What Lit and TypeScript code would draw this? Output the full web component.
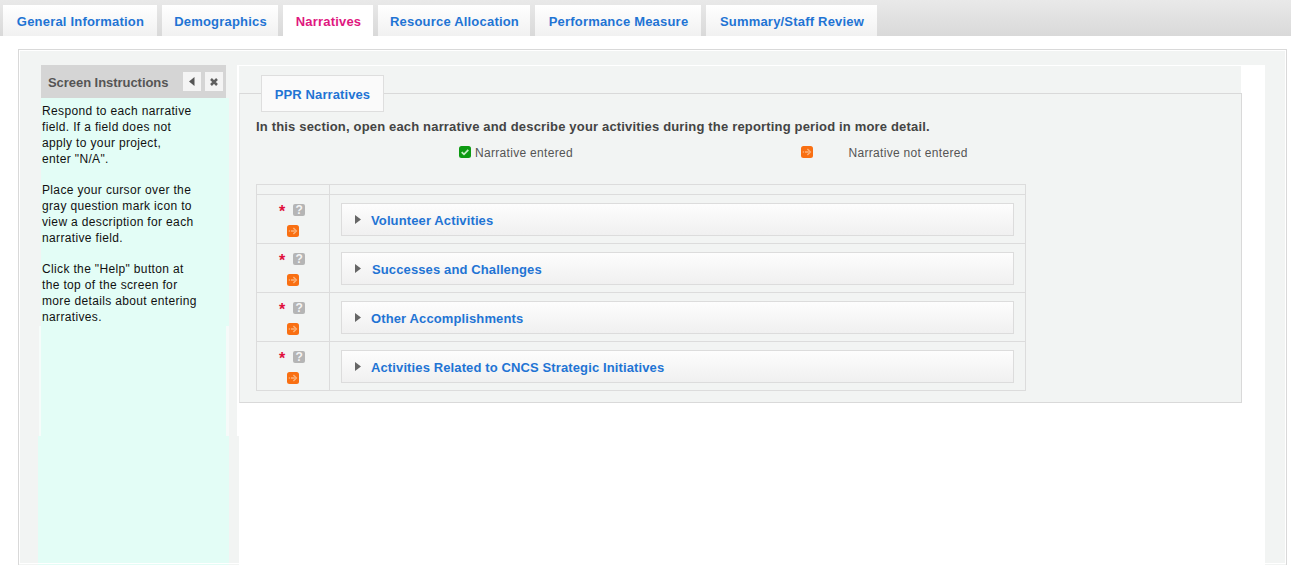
import { LitElement, css, html } from "lit";
import { customElement } from "lit/decorators.js";

const tabs = [
  { label: "General Information", width: 154 },
  { label: "Demographics", width: 116 },
  { label: "Narratives", width: 90, active: true },
  { label: "Resource Allocation", width: 152 },
  { label: "Performance Measure", width: 166 },
  { label: "Summary/Staff Review", width: 171 },
];

const narratives = [
  "Volunteer Activities",
  "Successes and Challenges",
  "Other Accomplishments",
  "Activities Related to CNCS Strategic Initiatives",
];

const orangeIcon = html`<svg class="icon" width="12" height="12" viewBox="0 0 12 12">
  <rect width="12" height="12" rx="2.5" fill="#f96f12"></rect>
  <path d="M1.8 6h1.1M3.9 6h3.9" stroke="#fbb27a" stroke-width="1.3" fill="none"></path>
  <path d="M6.4 3l3 3-3 3" stroke="#fbb27a" stroke-width="1.4" fill="none"></path>
</svg>`;

const greenIcon = html`<svg class="icon" width="12" height="12" viewBox="0 0 12 12">
  <rect width="12" height="12" rx="2.5" fill="#0d9a12"></rect>
  <path d="M2.7 6.1l2.3 2.3L9.3 3.8" stroke="#c8efc8" stroke-width="1.7" fill="none"></path>
</svg>`;

@customElement("app-root")
export class AppRoot extends LitElement {
  static styles = css`
    :host {
      display: block;
      height: 565px;
      overflow: hidden;
      background: #fff;
      font-family: "Liberation Sans", Arial, sans-serif;
    }
    .tabbar {
      display: flex;
      height: 36px;
      box-sizing: border-box;
      padding: 5px 0 0 3px;
      gap: 5px;
      background: linear-gradient(#e9e9e9, #d9d9d9);
    }
    .tab {
      box-sizing: border-box;
      padding: 9px 0 0 1px;
      text-align: center;
      font-size: 13px;
      line-height: 15px;
      font-weight: bold;
      letter-spacing: 0.2px;
      color: #1f74d4;
      background: linear-gradient(#ffffff, #f1f1f1);
    }
    .tab.active {
      color: #e0187f;
      background: #fff;
    }
    .frame {
      display: flex;
      height: 516px;
      box-sizing: border-box;
      margin: 13px 4px 0 18px;
      padding: 15px 21px 0 19px;
      border: 1px solid #d9d9d9;
      border-bottom: 0;
      outline: 1px solid #fff;
      outline-offset: -2px;
      background: #f2f4f3;
    }
    .sidebar {
      display: flex;
      flex-direction: column;
      flex: none;
      width: 194px;
      margin-right: 5px;
    }
    .side-head {
      display: flex;
      align-items: center;
      flex: none;
      height: 33px;
      box-sizing: border-box;
      margin: 0 6px 0 3px;
      padding: 0 3px 0 7px;
      background: #d5d5d5;
    }
    .side-title {
      flex: 1;
      padding-top: 1px;
      font-size: 13px;
      letter-spacing: -0.05px;
      font-weight: bold;
      color: #555;
    }
    .side-btn {
      display: flex;
      align-items: center;
      justify-content: center;
      width: 18px;
      height: 19px;
      margin-left: 4px;
      background: #f4f4f4;
    }
    .side-body {
      flex: none;
      height: 228px;
      box-sizing: border-box;
      margin: 0 3px 0 3px;
      padding: 5px 0 0 1px;
      background: #e3fdf6;
      font-size: 12px;
      line-height: 16px;
      letter-spacing: 0.35px;
      color: #111;
    }
    .side-body p {
      margin: 0 0 15px;
    }
    .side-mid {
      flex: none;
      height: 110px;
      box-sizing: border-box;
      margin: 0 3px 0 1px;
      border-left: 2px solid #f6fcfa;
      border-right: 3px solid #f6faf9;
      background: #e3fdf6;
    }
    .side-low {
      flex: 1;
      background: #e3fdf6;
      margin-right: 3px;
    }
    .main {
      display: flex;
      flex-direction: column;
      flex: 1;
      min-width: 0;
    }
    .main-top {
      flex: none;
      height: 371px;
      box-sizing: border-box;
      padding: 1px 23px 0 2px;
      background: #fff;
    }
    .main-low {
      flex: 1;
      margin-left: 2px;
      background: #fff;
    }
    .strip {
      height: 27px;
      padding-left: 22px;
      margin-right: 1px;
      background: #f2f4f3;
    }
    .panel-tab {
      position: relative;
      z-index: 1;
      width: 123px;
      height: 37px;
      box-sizing: border-box;
      padding-top: 11px;
      top: 9px;
      border: 1px solid #dedede;
      background: #fafafa;
      text-align: center;
      font-size: 13px;
      line-height: 15px;
      letter-spacing: 0.1px;
      font-weight: bold;
      color: #1f74d4;
    }
    .panel {
      height: 310px;
      box-sizing: border-box;
      padding: 25px 0 0 16px;
      border: 1px solid #d9d9d9;
      border-left-color: #e6e6e6;
      background: #f2f4f3;
    }
    .intro {
      font-size: 13px;
      line-height: 15px;
      letter-spacing: 0.17px;
      font-weight: bold;
      color: #444;
    }
    .legend {
      display: flex;
      align-items: center;
      height: 14px;
      margin-top: 11px;
      padding-left: 203px;
      font-size: 12px;
      letter-spacing: 0.31px;
      color: #555;
    }
    .legend span {
      margin-top: 2px;
    }
    .legend .icon {
      margin-right: 4px;
    }
    .legend .spacer {
      width: 228.5px;
    }
    .legend .far {
      margin-left: 31px;
    }
    .icon {
      flex: none;
      display: block;
    }
    .table {
      width: 768px;
      margin-top: 25px;
      border: 1px solid #dcdcdc;
    }
    .row {
      display: grid;
      grid-template-columns: 73px 1fr;
      height: 49px;
      box-sizing: border-box;
      border-bottom: 1px solid #dcdcdc;
    }
    .row:last-child {
      height: 48px;
      border-bottom: 0;
    }
    .row.head {
      height: 10px;
    }
    .marks {
      border-right: 1px solid #dcdcdc;
      display: flex;
      flex-direction: column;
      align-items: center;
      padding: 9px 1px 0 0;
    }
    .marks.empty {
      padding: 0;
    }
    .req {
      display: flex;
      align-items: center;
      gap: 8px;
      height: 12px;
      margin: 0 0 9px -1px;
    }
    .star {
      margin-top: 4px;
      font-size: 16px;
      line-height: 12px;
      font-weight: bold;
      color: #e0103c;
    }
    .q {
      width: 12px;
      height: 12px;
      border-radius: 2px;
      background: #b5b5b5;
      color: #f4f4f4;
      font-size: 12px;
      line-height: 12px;
      font-weight: bold;
      text-align: center;
    }
    .cell {
      padding: 8px 11px 0;
    }
    .box {
      display: flex;
      align-items: center;
      height: 33px;
      box-sizing: border-box;
      padding-left: 13px;
      border: 1px solid #dcdcdc;
      background: linear-gradient(#fdfdfd, #f0f0f0);
      font-size: 13px;
      letter-spacing: 0.12px;
      font-weight: bold;
      color: #1f74d4;
    }
    .box span {
      margin-top: 2px;
    }
    .box svg {
      margin-right: 10px;
      flex: none;
    }
    .box.nudge svg {
      margin-right: 11px;
    }
  `;

  render() {
    return html`
      <div class="tabbar">
        ${tabs.map(
          (t) => html`<div class="tab ${t.active ? "active" : ""}" style="width:${t.width}px">${t.label}</div>`
        )}
      </div>
      <div class="frame">
        <div class="sidebar">
          <div class="side-head">
            <div class="side-title">Screen Instructions</div>
            <div class="side-btn">
              <svg width="6" height="9" viewBox="0 0 6 9"><path d="M5.5 0v9L0 4.5z" fill="#555"></path></svg>
            </div>
            <div class="side-btn">
              <svg width="8" height="8" viewBox="0 0 8 8"><path d="M1 1l6 6M7 1L1 7" stroke="#5f5f5f" stroke-width="2.5"></path></svg>
            </div>
          </div>
          <div class="side-body">
            <p>Respond to each narrative<br />field. If a field does not<br />apply to your project,<br />enter "N/A".</p>
            <p>Place your cursor over the<br />gray question mark icon to<br />view a description for each<br />narrative field.</p>
            <p>Click the "Help" button at<br />the top of the screen for<br />more details about entering<br />narratives.</p>
          </div>
          <div class="side-mid"></div>
          <div class="side-low"></div>
        </div>
        <div class="main">
          <div class="main-top">
            <div class="strip"><div class="panel-tab">PPR Narratives</div></div>
            <div class="panel">
              <div class="intro">In this section, open each narrative and describe your activities during the reporting period in more detail.</div>
              <div class="legend">
                ${greenIcon}<span>Narrative entered</span>
                <span class="spacer"></span>
                ${orangeIcon}<span class="far">Narrative not entered</span>
              </div>
              <div class="table">
                <div class="row head"><div class="marks empty"></div><div></div></div>
                ${narratives.map(
                  (n, i) => html`<div class="row">
                    <div class="marks">
                      <div class="req"><span class="star">*</span><span class="q">?</span></div>
                      ${orangeIcon}
                    </div>
                    <div class="cell">
                      <div class="box ${i === 1 ? "nudge" : ""}">
                        <svg width="6" height="9" viewBox="0 0 6 9"><path d="M0 0v9l6-4.5z" fill="#666"></path></svg>
                        <span>${n}</span>
                      </div>
                    </div>
                  </div>`
                )}
              </div>
            </div>
          </div>
          <div class="main-low"></div>
        </div>
      </div>
    `;
  }
}
